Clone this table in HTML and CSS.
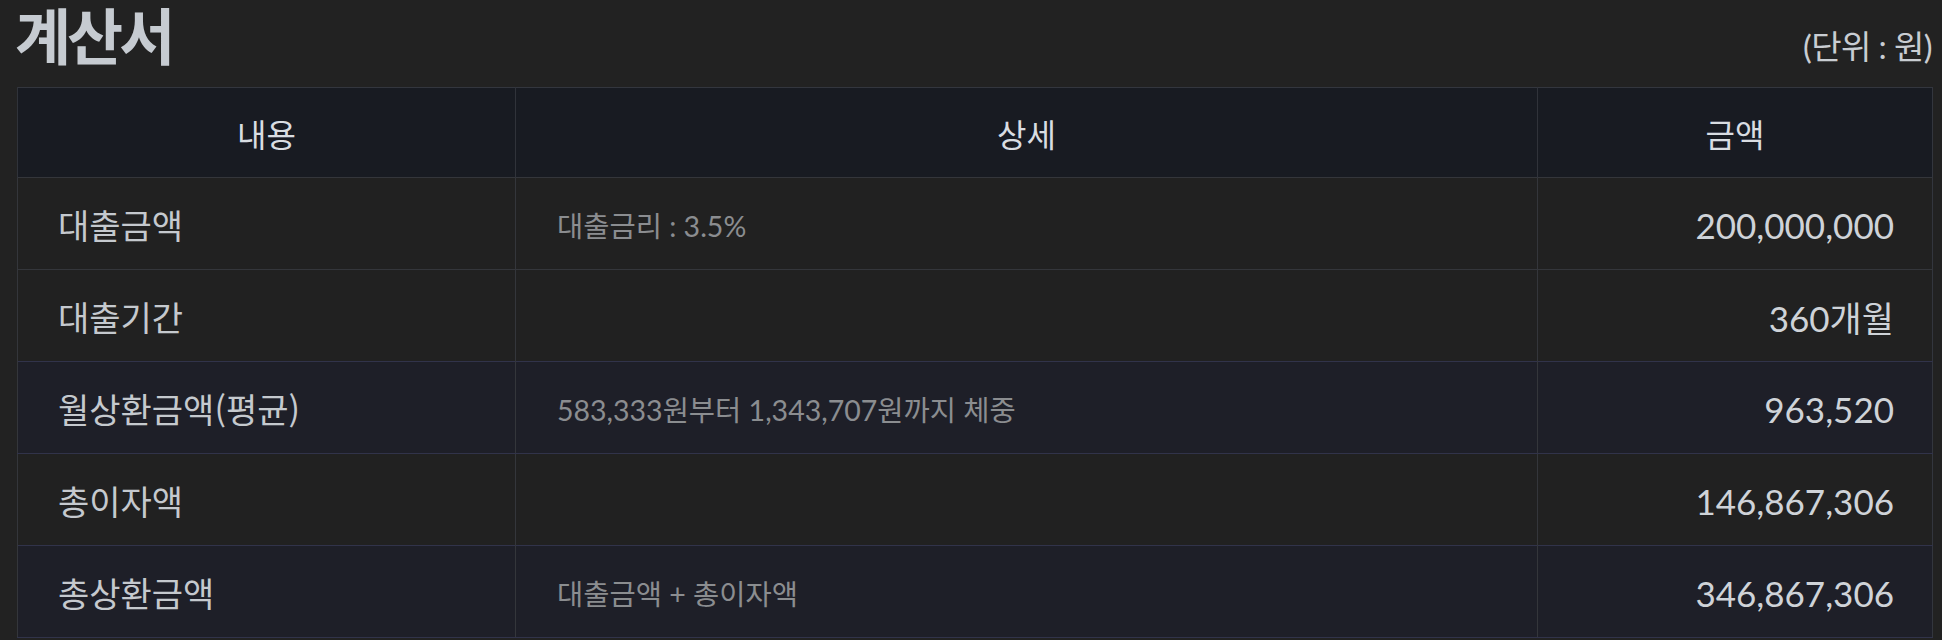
FILE: index.html
```html
<!DOCTYPE html>
<html lang="ko">
<head>
<meta charset="utf-8">
<title>계산서</title>
<link rel="stylesheet" href="styles.css">
</head>
<body>
<div class="page">
  <div class="head">
    <h1 class="title">계산서</h1>
    <span class="unit">(단위 : 원)</span>
  </div>
  <table class="calc">
    <colgroup>
      <col class="c1">
      <col class="c2">
      <col class="c3">
    </colgroup>
    <thead>
      <tr><th>내용</th><th>상세</th><th>금액</th></tr>
    </thead>
    <tbody>
      <tr>
        <td class="name">대출금액</td>
        <td class="detail">대출금리 : 3.5%</td>
        <td class="amount">200,000,000</td>
      </tr>
      <tr>
        <td class="name">대출기간</td>
        <td class="detail"></td>
        <td class="amount">360개월</td>
      </tr>
      <tr class="hl">
        <td class="name">월상환금액(평균)</td>
        <td class="detail">583,333원부터 1,343,707원까지 체중</td>
        <td class="amount">963,520</td>
      </tr>
      <tr>
        <td class="name">총이자액</td>
        <td class="detail"></td>
        <td class="amount">146,867,306</td>
      </tr>
      <tr class="hl">
        <td class="name">총상환금액</td>
        <td class="detail">대출금액 + 총이자액</td>
        <td class="amount">346,867,306</td>
      </tr>
    </tbody>
  </table>
</div>
</body>
</html>
```

FILE: styles.css
```css
html, body {
  margin: 0;
  padding: 0;
  background: #222222;
}
body {
  font-family: Lato, "Noto Sans CJK KR", sans-serif;
  color: #c9cdd2;
}
.page {
  padding: 0 10px 0 17px;
}
.head {
  height: 87px;
  display: flex;
  justify-content: space-between;
  align-items: flex-end;
  box-sizing: border-box;
  padding-bottom: 21px;
}
.title {
  margin: 0 0 0 -2px;
  font-family: "Noto Sans CJK KR", sans-serif;
  font-size: 61px;
  font-weight: 700;
  line-height: 1.05;
  letter-spacing: -4px;
  color: #c6cbd1;
}
.unit {
  font-family: Lato, "Noto Sans CJK KR", sans-serif;
  font-size: 33px;
  line-height: 1;
  color: #c9cdd2;
  letter-spacing: -0.6px;
  margin-right: 0;
  margin-bottom: 3px;
}
.calc {
  width: 100%;
  border-collapse: collapse;
  table-layout: fixed;
  border: 1px solid #33363e;
}
.c1 { width: 498px; }
.c2 { width: 1022px; }
.c3 { width: 395px; }
.calc th {
  height: 89px;
  padding: 0;
  background: #181b22;
  font-family: "Noto Sans CJK KR", sans-serif;
  font-weight: 400;
  font-size: 32px;
  color: #d9dde2;
  border-left: 1px solid #30333a;
  text-align: center;
}
.calc td {
  height: 92px;
  padding: 2px 0 0;
  box-sizing: border-box;
  background: #212121;
  border-top: 1px solid #34363b;
  border-left: 1px solid #34363b;
  vertical-align: middle;
}
.calc tr.hl td {
  background: #1e1f28;
  border-top-color: #31334a;
  border-bottom: 1px solid #31334a;
}
.name {
  padding-left: 40px !important;
  font-family: "Noto Sans CJK KR", sans-serif;
  font-size: 34px;
  color: #c5c9ce;
}
.detail {
  padding-left: 41px !important;
  font-size: 28.5px;
  color: #8b8d90;
}
.amount {
  text-align: right;
  padding-right: 38px !important;
  font-size: 35px;
  color: #cfd3d8;
}
```
